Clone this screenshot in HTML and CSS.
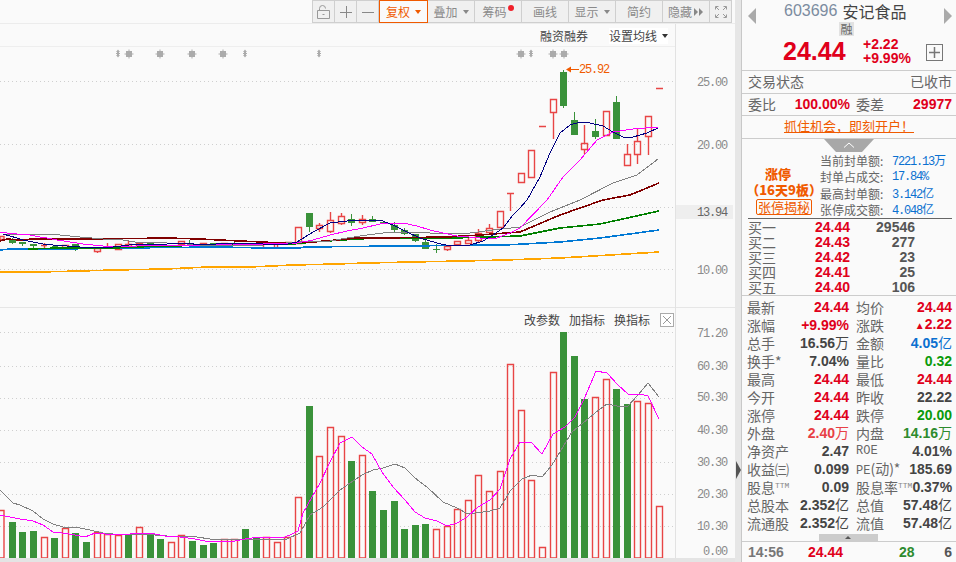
FILE: index.html
```html
<!DOCTYPE html>
<html lang="zh-CN">
<head>
<meta charset="utf-8">
<title>603696 安记食品</title>
<link rel="stylesheet" href="styles.css">
</head>
<body>
<div class="app">
  <main class="main">
    <div class="toolbar">
      <button class="tb tb-lock" aria-label="锁定"><svg width="15" height="14" viewBox="0 0 15 14"><path class="ic" d="M1.500 5.500h12v8h-12zM3.500 5.500V3.500a3 3 0 0 1 6 0"/><path class="ic" d="M6.500 9.500h2"/></svg></button>
      <button class="tb tb-sq" aria-label="放大"><svg width="12" height="12" viewBox="0 0 12 12"><path class="ic-t" d="M6.500 0v12M0 6.500h12"/></svg></button>
      <button class="tb tb-sq" aria-label="缩小"><svg width="12" height="12" viewBox="0 0 12 12"><path class="ic-t" d="M0 6.500h12"/></svg></button>
      <button class="tb tb-on">复权<i class="caret"></i></button>
      <button class="tb">叠加<i class="caret"></i></button>
      <button class="tb">筹码<i class="dot"></i></button>
      <button class="tb">画线</button>
      <button class="tb">显示<i class="caret"></i></button>
      <button class="tb">简约</button>
      <button class="tb">隐藏<svg class="ff" width="10" height="8" viewBox="0 0 10 8"><path d="M0 0l4 4-4 4zM5 0l4 4-4 4z"/></svg></button>
      <button class="tb tb-full" aria-label="全屏"><svg width="12" height="12" viewBox="0 0 12 12"><path class="ic" d="M0.500 3.500v-3h3M8.500 0.500h3v3M11.500 8.500v3h-3M3.500 11.500h-3v-3M1 1l3 3M11 1l-3 3M11 11l-3-3M1 11l3-3"/></svg></button>
    </div>

    <section class="panel kline">
      <div class="tools tools-k">
        <span>融资融券</span>
        <span class="ma-set">设置均线<i class="caret caret-dark"></i></span>
      </div>
      <svg class="plot" width="735" height="284" viewBox="0 24 735 284">
        <defs>
          <g id="star"><path d="M-3-3h6v6h-6zM-.5-4.500h1v9h-1zM-4.500-.5h9v1h-9z"/></g>
          <g id="dia"><path d="M0-4.500l2 2.500h-1v1h1v1h-1v1h1l-2 2.500-2-2.500h1v-1h-1v-1h1v-1h-1z"/></g>
        </defs>
        <path class="hl" d="M0 46.500h675"/>
        <path class="grid" d="M0 81.500h675M0 144.500h675M0 207.500h675M0 269.500h675"/>
        <path class="vl" d="M675.500 24v284"/>
        <g class="marks">
          <use href="#dia" x="118" y="54"/><use href="#star" x="129" y="54"/><use href="#star" x="160" y="54"/>
          <use href="#star" x="192" y="54"/><use href="#star" x="223" y="54"/><use href="#dia" x="245" y="54"/>
          <use href="#dia" x="319" y="54"/><use href="#star" x="521" y="54"/><use href="#dia" x="531" y="54"/>
          <use href="#star" x="553" y="54"/><use href="#star" x="564" y="54"/>
        </g>
        <path class="c-up" d="M0 236.500h4v3h-4zM41 245.500h6M44.500 243v5M62.500 245.500h6v3h-6zM94.500 248.500h6v3h-6zM97.500 251v2M107.500 243v4M115.500 244.500h6v5h-6zM125.500 244.500h6v2h-6zM128.500 241v3M136.500 243.500h6v2h-6zM178.500 241.500h6v3h-6zM200.500 243.500h6v2h-6zM221.500 243.500h6v2h-6zM263.500 245v3M274.500 245v3M277.500 245v3M285 242.500h7
          M295.500 227.500h6v16h-6zM316.500 225.500h6v3h-6zM319.500 223v2M319.500 228v4M327.500 220.500h6v11h-6zM330.500 212v8M330.500 231v2M338.500 216.500h6v7h-6zM341.500 213v3M341.500 223v2M359.500 219.500h6v3h-6zM362.500 215v4M362.500 222v3
          M444.500 246.500h6v3h-6zM447.500 249v2M454.500 241.500h6v3h-6zM465.500 240.500h6v3h-6zM468.500 237v3M475.500 233.500h6v7h-6zM478.500 229v4M478.500 240v2M486.500 228.500h6v4h-6zM489.500 224v4M497.500 211.500h6v16h-6zM507 193.500h7M510.500 193v18M518.500 173.500h6v9h-6zM528.500 150.500h6v27h-6zM539 126.500h7M550.500 99.500h6v13h-6zM553.500 112v27
          M581.500 143.500h6v6h-6zM584.500 125v18M584.500 149v5M603.500 111.500h6v24h-6zM624.500 154.500h6v11h-6zM627.500 144v10M634.500 141.500h6v13h-6zM637.500 129v12M637.500 154v10M645.500 116.500h6v20h-6zM648.500 136v19M656 88.500h7"/>
        <path class="c-dn" d="M9.500 239.500h6v3h-6zM12.500 238v1M12.500 243v1M19.500 242.500h6v1h-6zM22.500 244v2M30.500 244.500h6v1h-6zM33.500 246v2M51.500 246.500h6v0h-6zM72.500 244.500h6v3h-6zM75.500 248v3M147.500 242.500h6v1h-6zM189.500 239.500v4M210.500 243.500h6v1h-6zM234.500 240v3M256 247.500h6v1h-6z
          M306.500 213.500h6v13h-6zM309.500 227v5M348.500 219.500h6v3h-6zM351.500 214v5M351.500 223v3M369.500 219.500h6v2h-6zM372.500 216v3M380.500 222.500h6v1h-6zM391.500 225.500h6v4h-6zM394.500 222v3M394.500 230v2M401.500 230.500h6v3h-6zM404.500 228v2M404.500 234v1M412.500 234.500h6v6h-6zM415.500 241v1M422.500 242.500h6v6h-6zM425.500 239v3M433 249.500h7M436.500 244v9
          M560.500 72.500h6v33h-6zM563.500 70v2M563.500 106v2M571.500 120.500h6v14h-6zM574.500 112v8M592.500 131.500h6v5h-6zM595.500 119v12M595.500 137v2M613.500 102.500h6v36h-6zM616.500 96v6"/>
        <polyline class="ma ma-orange bold" points="0,272 39,272 80,271 113,270 166,269 208,267 250,267 293,265 336,264 367,263 410,262 463,261 505,260 560,258 610,255 659,252"/>
        <polyline class="ma ma-blue bold" points="0,250 10,249 60,249 120,248 220,247 263,248 300,248 304,247 398,246 505,245 560,242 600,238 659,230"/>
        <polyline class="ma ma-green bold" points="28,249 60,248 113,248 160,246 233,245 293,244 313,242 357,239 380,238 453,238 520,236 560,228 600,224 659,211"/>
        <polyline class="ma ma-dred bold" points="0,241 7,239 20,240 33,239 103,239 167,238 200,239 220,240 240,241 263,242 280,243 313,242 337,240 357,238 380,238 447,237 480,235 520,232 560,215 603,200 630,195 659,183"/>
        <polyline class="ma ma-gray" points="7,234 50,234 60,235 70,236 80,237 103,239 123,240 135,242 167,243 187,244 213,246 240,245 263,245 297,242 330,241 347,238 367,235 383,233 413,232 430,233 450,234 470,233 493,230 520,227 550,212 580,200 613,183 637,175 658,159"/>
        <polyline class="ma ma-pink" points="0,232 7,233 17,234 30,235 40,237 47,238 57,240 70,242 83,244 93,245 113,247 137,246 167,245 200,245 233,244 263,244 290,243 297,243 313,240 330,235 347,231 363,228 380,224 403,223 417,226 430,230 443,233 457,236 480,238 497,238 510,233 520,228 547,200 563,177 580,160 597,140 613,132 633,129 658,127"/>
        <polyline class="ma ma-navy" points="3,234 10,236 17,238 23,240 33,242 43,244 53,245 67,246 80,247 93,248 113,247 137,244 167,244 187,243 200,245 233,243 263,244 283,245 297,242 313,232 330,223 347,221 363,220 380,220 393,225 407,232 420,238 437,243 450,246 470,245 483,241 493,235 503,228 513,215 520,208 527,200 540,177 550,153 560,133 570,125 580,122 590,123 603,126 613,132 623,137 633,137 647,133 658,128"/>
        <path class="arrow" d="M566 69.500l5-3v2.500h8v1h-8v2.500z"/>
        <text class="peak" x="579" y="73">25.92</text>
        <text class="ax" x="727" y="86">25.00</text>
        <text class="ax" x="727" y="149">20.00</text>
        <text class="ax" x="727" y="274">10.00</text>
        <rect class="cur" x="676" y="205" width="57" height="14"/>
        <text class="ax ax-cur" x="727" y="216">13.94</text>
      </svg>
    </section>

    <section class="panel vol">
      <div class="tools tools-v">
        <span>改参数</span><span>加指标</span><span>换指标</span>
        <span class="close" aria-label="关闭"><svg width="10" height="10" viewBox="0 0 10 10"><path class="ic" d="M1 1l8 8M9 1l-8 8"/></svg></span>
      </div>
      <svg class="plot" width="735" height="250" viewBox="0 308 735 250">
        <path class="grid" d="M0 332.500h675M0 366.500h675M0 398.500h675M0 430.500h675M0 462.500h675M0 494.500h675M0 526.500h675"/>
        <path class="vl" d="M675.500 308v250"/>
        <path class="v-dn" d="M9 522h7v36h-7zM19 532h7v26h-7zM30 531h7v27h-7zM51 538h7v20h-7zM72 533h7v25h-7zM83 542h7v16h-7zM125 535h7v23h-7zM147 534h7v24h-7zM157 539h7v19h-7zM189 541h7v17h-7zM200 545h7v13h-7zM210 543h7v15h-7zM242 529h7v29h-7zM253 537h7v21h-7zM306 406h7v152h-7zM348 461h7v97h-7zM369 491h7v67h-7zM380 510h7v48h-7zM391 501h7v57h-7zM401 529h7v29h-7zM412 525h7v33h-7zM422 524h7v34h-7zM560 332h7v226h-7zM571 356h7v202h-7zM581 399h7v159h-7zM613 389h7v169h-7zM624 404h7v154h-7z"/>
        <path class="v-up" d="M-1 510.500h5V558h-5zM41.500 537.500h6V558h-6zM62.500 528.500h6V558h-6zM94.500 532.500h6V558h-6zM104.500 534.500h6V558h-6zM115.500 535.500h6V558h-6zM136.500 527.500h6V558h-6zM168.500 542.500h6V558h-6zM178.500 535.500h6V558h-6zM221.500 539.500h6V558h-6zM231.500 539.500h6V558h-6zM263.500 537.500h6V558h-6zM274.500 542.500h6V558h-6zM284.500 537.500h6V558h-6zM295.500 497.500h6V558h-6zM316.500 456.500h6V558h-6zM327.500 427.500h6V558h-6zM338.500 436.500h6V558h-6zM359.500 455.500h6V558h-6zM433.500 529.500h6V558h-6zM444.500 526.500h6V558h-6zM454.500 509.500h6V558h-6zM465.500 500.500h6V558h-6zM475.500 475.500h6V558h-6zM486.500 491.500h6V558h-6zM497.500 471.500h6V558h-6zM507.500 364.500h6V558h-6zM518.500 410.500h6V558h-6zM528.500 480.500h6V558h-6zM539.500 547.500h6V558h-6zM550.500 372.500h6V558h-6zM592.500 397.500h6V558h-6zM603.500 379.500h6V558h-6zM634.500 401.500h6V558h-6zM645.500 403.500h6V558h-6zM656.500 506.500h6V558h-6z"/>
        <polyline class="ma ma-gray" points="0,490 7,497 13,503 20,505 33,511 43,519 53,524 63,527 80,528 90,530 103,533 123,535 143,534 167,536 197,537 210,539 253,539 287,539 300,533 310,515 323,507 340,490 350,483 362,475 373,470 383,468 395,464 405,468 415,478 427,487 443,502 457,508 468,514 490,511 500,508 510,491 522,479 532,475 542,477 552,465 560,452 572,432 583,423 595,413 607,404 617,406 628,406 638,395 648,383 659,397"/>
        <polyline class="ma ma-pink" points="0,515 10,517 20,519 33,521 43,525 53,532 62,533 75,535 85,537 95,533 105,534 125,535 135,533 150,533 165,536 180,537 195,539 205,541 235,541 245,539 260,537 285,537 292,534 298,531 303,513 312,497 320,483 330,462 340,443 352,437 362,447 372,454 382,472 393,487 405,500 415,512 425,518 437,521 447,526 457,523 467,517 478,507 490,500 500,489 510,459 520,442 532,443 542,454 553,434 565,427 575,417 585,397 596,371 607,373 618,385 628,394 640,394 648,396 659,419"/>
        <text class="ax" x="727" y="337">71.20</text>
        <text class="ax" x="727" y="370">60.30</text>
        <text class="ax" x="727" y="401">50.30</text>
        <text class="ax" x="727" y="434">40.30</text>
        <text class="ax" x="727" y="466">30.30</text>
        <text class="ax" x="727" y="498">20.30</text>
        <text class="ax" x="727" y="530">10.30</text>
        <text class="ax" x="727" y="555">0.00</text>
      </svg>
    </section>
    <div class="baseline"></div>
  </main>

  <div class="splitter"><i class="split-arrow"></i></div>

  <aside class="side">
    <header class="s-head">
      <div class="s-title">
        <i class="nav nav-l"></i>
        <span class="code">603696</span><span class="name">安记食品</span>
        <i class="nav nav-r"></i>
      </div>
      <div class="s-badge"><span class="rong">融</span></div>
      <div class="s-price">
        <span class="big">24.44</span>
        <span class="chg"><b>+2.22</b><b>+9.99%</b></span>
        <span class="plus"><svg width="11" height="11" viewBox="0 0 11 11"><path class="ic-strong" d="M5.500 0v11M0 5.500h11"/></svg></span>
      </div>
    </header>
    <div class="s-row s-h23"><span class="lb">交易状态</span><span class="lb">已收市</span></div>
    <div class="s-row s-h22">
      <span class="lb">委比</span><b class="red w-a">100.00%</b><span class="lb w-b">委差</span><b class="red w-c">29977</b>
    </div>
    <div class="s-row s-h23 s-center"><a class="open" href="#">抓住机会&#xFF0C;即刻开户&#xFF01;</a></div>

    <div class="zt">
      <i class="zt-handle"><svg width="12" height="6" viewBox="0 0 12 6"><path d="M1 5.500l5-4.500 5 4.500"/></svg></i>
      <div class="zt-left">
        <b class="zt-title">涨停</b>
        <b>&#xFF08;16天9板&#xFF09;</b>
        <span class="zt-btn">张停揭秘</span>
      </div>
      <dl class="zt-right">
        <div><dt>当前封单额:</dt><dd>7221.13<u>万</u></dd></div>
        <div><dt>封单占成交:</dt><dd>17.84%</dd></div>
        <div><dt>最高封单额:</dt><dd>3.142<u>亿</u></dd></div>
        <div><dt>张停成交额:</dt><dd>4.048<u>亿</u></dd></div>
      </dl>
    </div>

    <div class="book">
      <div class="b-row"><span class="lb">买一</span><b class="red">24.44</b><b class="vol-n">29546</b></div>
      <div class="b-row"><span class="lb">买二</span><b class="red">24.43</b><b class="vol-n">277</b></div>
      <div class="b-row"><span class="lb">买三</span><b class="red">24.42</b><b class="vol-n">23</b></div>
      <div class="b-row"><span class="lb">买四</span><b class="red">24.41</b><b class="vol-n">25</b></div>
      <div class="b-row"><span class="lb">买五</span><b class="red">24.40</b><b class="vol-n">106</b></div>
    </div>

    <div class="quote">
      <div class="q"><span>最新</span><b class="red">24.44</b></div><div class="q"><span>均价</span><b class="red">24.44</b></div>
      <div class="q"><span>涨幅</span><b class="red">+9.99%</b></div><div class="q"><span>涨跌</span><b class="red"><small>▲</small>2.22</b></div>
      <div class="q"><span>总手</span><b class="dark">16.56<em>万</em></b></div><div class="q"><span>金额</span><b class="blue">4.05<em>亿</em></b></div>
      <div class="q"><span>换手*</span><b class="dark">7.04%</b></div><div class="q"><span>量比</span><b class="green">0.32</b></div>
      <div class="q"><span>最高</span><b class="red">24.44</b></div><div class="q"><span>最低</span><b class="red">24.44</b></div>
      <div class="q"><span>今开</span><b class="red">24.44</b></div><div class="q"><span>昨收</span><b class="dark">22.22</b></div>
      <div class="q"><span>涨停</span><b class="red">24.44</b></div><div class="q"><span>跌停</span><b class="green">20.00</b></div>
      <div class="q"><span>外盘</span><b class="red2">2.40<em>万</em></b></div><div class="q"><span>内盘</span><b class="green2">14.16<em>万</em></b></div>
      <div class="q"><span>净资产</span><b class="dark">2.47</b></div><div class="q"><span class="mono">ROE</span><b class="dark">4.01%</b></div>
      <div class="q"><span>收益㈢</span><b class="dark">0.099</b></div><div class="q"><span><span class="mono">PE</span>(动)*</span><b class="dark">185.69</b></div>
      <div class="q"><span>股息<sup>TTM</sup></span><b class="dark">0.09</b></div><div class="q"><span>股息率<sup>TTM</sup></span><b class="dark">0.37%</b></div>
      <div class="q"><span>总股本</span><b class="dark">2.352<em>亿</em></b></div><div class="q"><span>总值</span><b class="dark">57.48<em>亿</em></b></div>
      <div class="q"><span>流通股</span><b class="dark">2.352<em>亿</em></b></div><div class="q"><span>流值</span><b class="dark">57.48<em>亿</em></b></div>
    </div>
    <div class="q-handle"><i></i></div>
    <div class="tick"><b class="t-time">14:56</b><b class="red t-price">24.44</b><b class="green2 t-vol">28</b><b class="t-n">6</b></div>
  </aside>
</div>
</body>
</html>
```

FILE: styles.css
```css
* { box-sizing: border-box; }
html, body { margin: 0; padding: 0; height: 100%; }
body {
  width: 956px; height: 562px; overflow: hidden;
  background: #fafafa; color: #555;
  font-family: "Liberation Sans", "Noto Sans CJK SC", sans-serif;
  font-size: 14px;
  line-height: 16px;
}
.app { display: flex; height: 562px; }

/* ---------- main column ---------- */
.main { width: 735px; display: flex; flex-direction: column; }
.toolbar {
  height: 24px; padding-left: 312px; display: flex; align-items: flex-start;
  border-bottom: 1px solid #ececec;
}
.tb {
  width: 47px; height: 23px; margin: 0; padding: 0;
  display: flex; align-items: center; justify-content: center; gap: 5px;
  background: #f0f0f0; color: #8a8a8a;
  border: 1px solid #cfcfcf; border-left: 0;
  font: 12px/14px "Noto Sans CJK SC", sans-serif;
}
.tb-lock { width: 23px; border-left: 1px solid #cfcfcf; }
.tb-sq { width: 22px; }
.tb-on { width: 49px; background: #fafafa; color: #f05a00; border: 1px solid #f05a00; }
.tb-full { width: 22px; }
.ic { fill: none; stroke: #999; stroke-width: 1; }
.ic-t { fill: none; stroke: #888; stroke-width: 1; }
.ff { fill: #888; margin-left: -3px; }
.caret {
  display: inline-block; width: 0; height: 0; flex: none;
  border: 3.5px solid transparent; border-top: 4px solid #888; border-bottom: 0;
}
.tb-on .caret { border-top-color: #f05a00; }
.caret-dark { border-top-color: #333; margin-left: 5px; }
.dot { width: 6px; height: 6px; border-radius: 50%; background: #f0202a; margin: -8px 0 0 -4px; }

.panel { position: relative; }
.kline { height: 284px; border-bottom: 1px solid #e6e6e6; }
.vol { height: 250px; }
.plot { display: block; }
.baseline { flex: 1; background: #e4e4e4; }

.tools {
  position: absolute; display: flex; align-items: center;
  font: 12px/16px "Noto Sans CJK SC", sans-serif; color: #444; white-space: nowrap;
}
.tools-k { right: 67px; top: 4px; gap: 21px; }
.ma-set { display: flex; align-items: center; background: #fff; }
.tools-v { right: 61px; top: 4px; gap: 9px; }
.close {
  width: 14px; height: 14px; display: flex; align-items: center; justify-content: center;
  background: #fff; border: 1px solid #aaa; margin-left: 1px;
}

/* chart strokes */
.hl { stroke: #eeeeee; fill: none; }
.vl { stroke: #e2e2e2; fill: none; }
.grid { stroke: #cfcfcf; stroke-dasharray: 1 3; fill: none; }
.marks { fill: #ababab; }
.c-up, .v-up { fill: none; stroke: #e84545; stroke-width: 1.4; }
.c-dn { fill: #3a923a; stroke: #3a923a; shape-rendering: crispEdges; }
.v-dn { fill: #3a923a; shape-rendering: crispEdges; }
.ma { fill: none; stroke-width: 1; shape-rendering: crispEdges; }
.bold { stroke-width: 1.6; }
.ma-navy { stroke: #000080; }
.ma-pink { stroke: #ff00ff; }
.ma-gray { stroke: #808080; }
.ma-dred { stroke: #800000; }
.ma-green { stroke: #008000; }
.ma-blue { stroke: #0078d4; }
.ma-orange { stroke: #ffa500; }
.arrow { fill: #f05a00; }
.peak { font: 12px "Liberation Mono", monospace; fill: #f05a00; letter-spacing: -1.2px; }
.ax { font: 12px "Liberation Mono", monospace; letter-spacing: -1.2px; fill: #8a8a8a; text-anchor: end; }
.ax-cur { fill: #666; }
.cur { fill: #eeeeee; }

/* ---------- splitter ---------- */
.splitter {
  width: 6px; background: #e6e6e6; display: flex; align-items: flex-start;
  padding-top: 461px; height: 562px;
}
.split-arrow {
  width: 0; height: 0; margin-left: 1px;
  border: 9px solid transparent; border-left: 5px solid #555; border-right: 0;
}

/* ---------- side panel ---------- */
.side { width: 215px; border-left: 1px solid #c8c8c8; display: flex; flex-direction: column; }
.s-head { height: 71px; border-bottom: 1px solid #ccc; position: relative; }
.s-title { height: 22px; display: flex; align-items: center; padding-left: 42px; font-size: 16px; line-height: 18px; }
.code { color: #7c8ca0; margin-right: 5px; }
.name { color: #444; font-family: "Noto Sans CJK SC", sans-serif; }
.nav { position: absolute; top: 8px; width: 0; height: 0; border: 8px solid transparent; }
.nav-l { left: 6px; border-right: 8px solid #aaa; border-left: 0; }
.nav-r { right: 4px; border-left: 8px solid #aaa; border-right: 0; }
.s-badge { height: 14px; padding-left: 97px; }
.rong {
  display: block; width: 15px; height: 14px; background: #e2e2e2; color: #666;
  font: 12px/14px "Noto Sans CJK SC", sans-serif; text-align: center;
}
.s-price { display: flex; align-items: center; height: 29px; padding-left: 41px; position: relative; }
.big { font-size: 25px; line-height: 28px; font-weight: 700; color: #e0001a; width: 80px; }
.chg { display: flex; flex-direction: column; font-size: 14px; line-height: 14px; color: #e0001a; }
.plus {
  position: absolute; left: 184px; top: 8px; width: 17px; height: 17px;
  border: 1px solid #777; display: flex; align-items: center; justify-content: center;
}
.ic-strong { stroke: #777; stroke-width: 1.5; fill: none; }

.s-row {
  display: flex; align-items: center; justify-content: space-between;
  padding: 0 4px 2px 6px; border-bottom: 1px solid #ccc;
}
.s-h23 { height: 23px; }
.s-h22 { height: 22px; justify-content: flex-start; }
.s-center { justify-content: center; padding: 0 0 2px; }
.lb { font-family: "Noto Sans CJK SC", sans-serif; color: #666; font-size: 14px; line-height: 14px; }
.w-a { width: 74px; text-align: right; }
.w-b { margin-left: 6px; }
.w-c { flex: 1; text-align: right; }
.red { color: #e0001a; }
.open { color: #f05a00; font: 13px/16px "Noto Sans CJK SC", sans-serif; }

.zt { height: 80px; margin: 0 4px 0 6px; position: relative; display: flex; border-bottom: 1px solid #666; padding-top: 14px; }
.zt-handle {
  position: absolute; left: 76px; top: 0; width: 50px; height: 13px; background: #a8a8a8;
  clip-path: polygon(0 0, 100% 0, 76% 100%, 24% 100%);
  display: flex; justify-content: center; align-items: flex-start; padding-top: 3px;
}
.zt-handle path { stroke: #fff; fill: none; }
.zt-left {
  width: 72px; flex: none; display: flex; flex-direction: column; align-items: center;
  font: 700 13px/16px "Noto Sans CJK SC", sans-serif; color: #f05a00; padding-top: 13px; white-space: nowrap;
}
.zt-title { margin-right: 12px; }
.zt-btn {
  width: 56px; height: 16px; border: 1px solid #f05a00; border-radius: 2px; flex: none;
  font: 400 13px/14px "Noto Sans CJK SC", sans-serif; text-align: center; margin-top: 1px;
}
.zt-right { margin: 0; display: flex; flex-direction: column; }
.zt-right div { display: flex; height: 16.300px; align-items: center; }
.zt-right dt { width: 72px; color: #666; font: 12px/14px "Noto Sans CJK SC", sans-serif; white-space: nowrap; }
.zt-right dd { margin: 0; color: #0a70d0; font: 12px/14px "Liberation Mono", monospace; letter-spacing: -1.2px; white-space: nowrap; }
.zt-right u { text-decoration: none; font: 12px/14px "Noto Sans CJK SC", sans-serif; letter-spacing: 0; }

.book { height: 77px; border-bottom: 1px solid #ccc; padding: 1px 0 0 6px; }
.b-row { height: 14.800px; display: flex; align-items: center; }
.b-row .red { width: 74px; text-align: right; }
.vol-n { width: 65px; text-align: right; color: #555; }

.quote {
  height: 238px; padding: 2px 4px 0 5px;
  display: grid; grid-template-columns: 102px 96px; column-gap: 7px; grid-auto-rows: 18px;
}
.q { display: flex; justify-content: space-between; align-items: center; white-space: nowrap; }
.q span { font-family: "Noto Sans CJK SC", sans-serif; color: #666; line-height: 16px; }
.q .mono { font: 12px/14px "Liberation Mono", monospace; }
.q sup { font: 8px/8px "Liberation Mono", monospace; color: #888; vertical-align: 5px; }
.q em { font: 400 14px/14px "Noto Sans CJK SC", sans-serif; }
.q small { font-size: 10px; }
.dark { color: #444; }
.blue { color: #0a70d0; }
.green { color: #0a9a0a; }
.red2 { color: #e84045; }
.green2 { color: #2e8b2e; }

.q-handle { height: 8px; border-bottom: 1px solid #ccc; display: flex; justify-content: center; padding-right: 2px; }
.q-handle i {
  width: 59px; height: 7px; background: #cccccc; display: flex; justify-content: center; align-items: center;
}
.q-handle i::after { content: ""; border: 3px solid transparent; border-bottom: 3px solid #555; border-top: 0; }
.tick { flex: 1; display: flex; align-items: center; padding: 0 4px 0 6px; }
.t-time { width: 60px; color: #777; }
.t-price { width: 91px; }
.t-vol { width: 35px; }
.t-n { flex: 1; text-align: right; color: #555; }
```
